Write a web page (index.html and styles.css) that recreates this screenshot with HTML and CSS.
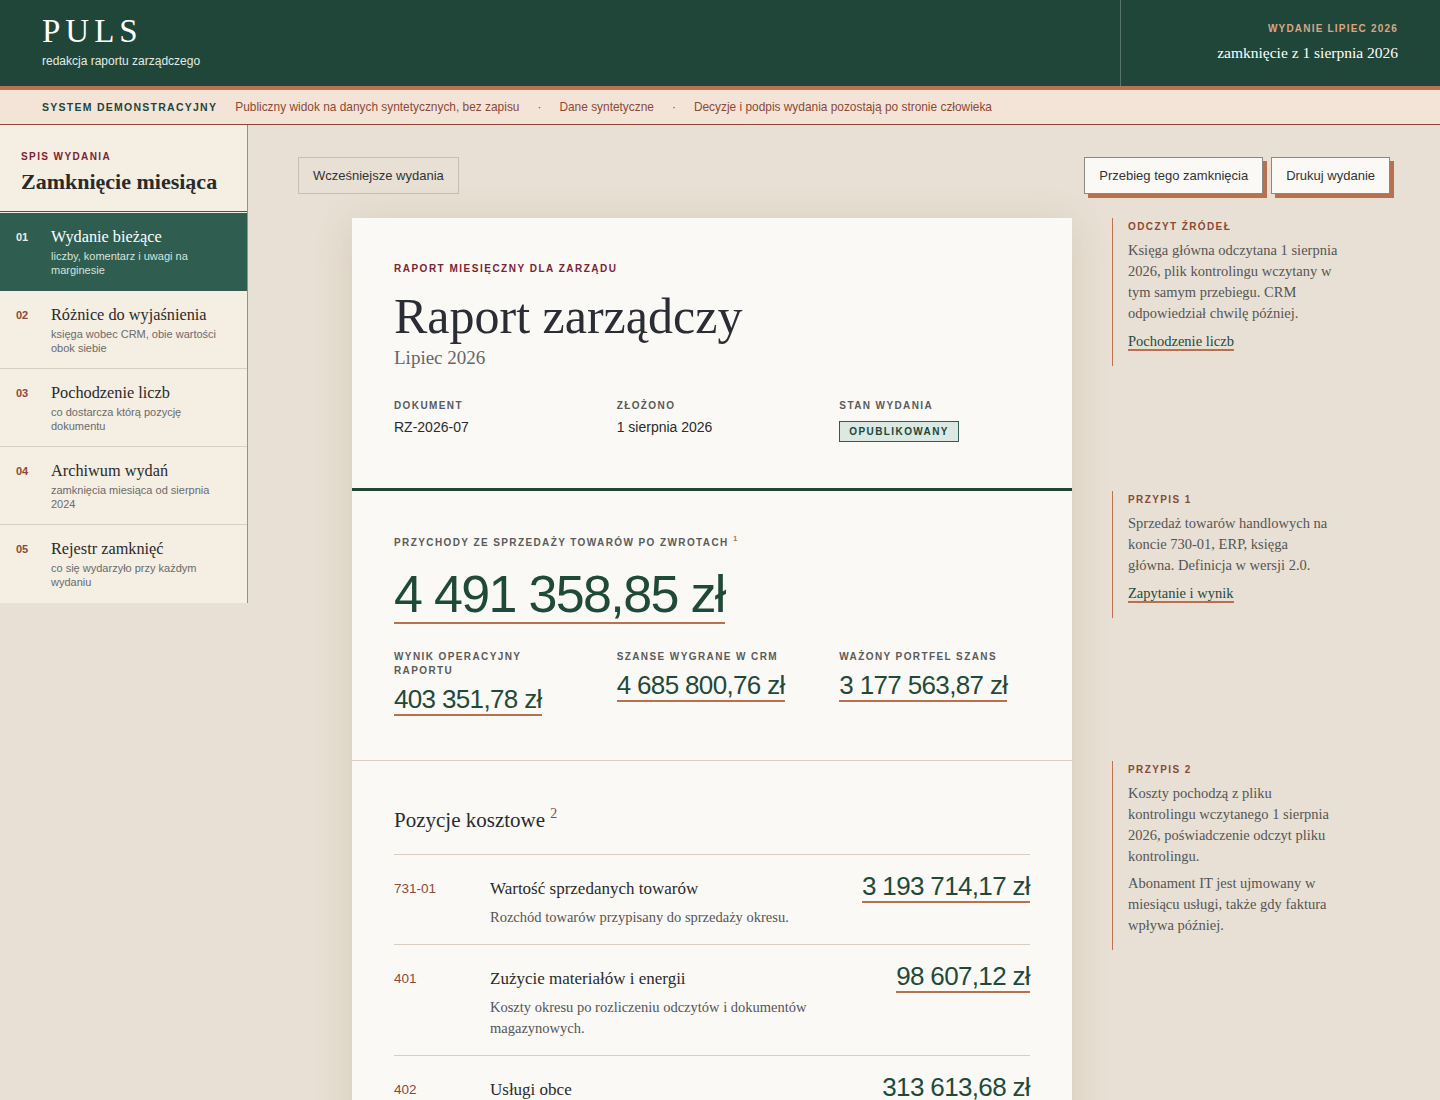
FILE: index.html
```html
<!DOCTYPE html>
<html lang="pl">
<head>
<meta charset="utf-8">
<title>PULS — Raport zarządczy</title>
<link rel="stylesheet" href="styles.css">
</head>
<body>
<header class="masthead">
  <div class="brand">
    <div class="brand-name">PULS</div>
    <div class="brand-sub">redakcja raportu zarządczego</div>
  </div>
  <div class="edition">
    <div class="edition-label">WYDANIE LIPIEC 2026</div>
    <div class="edition-date">zamknięcie z 1 sierpnia 2026</div>
  </div>
</header>
<div class="demo-bar">
  <strong class="demo-title">SYSTEM DEMONSTRACYJNY</strong>
  <span>Publiczny widok na danych syntetycznych, bez zapisu</span>
  <span class="dot">·</span>
  <span>Dane syntetyczne</span>
  <span class="dot">·</span>
  <span>Decyzje i podpis wydania pozostają po stronie człowieka</span>
</div>
<div class="layout">
  <aside class="toc">
    <div class="toc-head">
      <div class="toc-eyebrow">SPIS WYDANIA</div>
      <div class="toc-title">Zamknięcie miesiąca</div>
    </div>
    <ul class="toc-list">
      <li class="toc-item is-active">
        <span class="toc-num">01</span>
        <div><div class="toc-name">Wydanie bieżące</div><div class="toc-desc">liczby, komentarz i uwagi na marginesie</div></div>
      </li>
      <li class="toc-item">
        <span class="toc-num">02</span>
        <div><div class="toc-name">Różnice do wyjaśnienia</div><div class="toc-desc">księga wobec CRM, obie wartości obok siebie</div></div>
      </li>
      <li class="toc-item">
        <span class="toc-num">03</span>
        <div><div class="toc-name">Pochodzenie liczb</div><div class="toc-desc">co dostarcza którą pozycję dokumentu</div></div>
      </li>
      <li class="toc-item">
        <span class="toc-num">04</span>
        <div><div class="toc-name">Archiwum wydań</div><div class="toc-desc">zamknięcia miesiąca od sierpnia 2024</div></div>
      </li>
      <li class="toc-item">
        <span class="toc-num">05</span>
        <div><div class="toc-name">Rejestr zamknięć</div><div class="toc-desc">co się wydarzyło przy każdym wydaniu</div></div>
      </li>
    </ul>
  </aside>
  <main class="main">
    <div class="toolbar">
      <button class="btn btn-ghost">Wcześniejsze wydania</button>
      <div class="actions">
        <button class="btn btn-raised">Przebieg tego zamknięcia</button>
        <button class="btn btn-raised">Drukuj wydanie</button>
      </div>
    </div>
    <div class="report">
      <div class="doc-bg"></div>

      <section class="sec sec-head">
        <div class="eyebrow">RAPORT MIESIĘCZNY DLA ZARZĄDU</div>
        <h1 class="doc-title">Raport zarządczy</h1>
        <div class="doc-period">Lipiec 2026</div>
        <div class="meta">
          <div><div class="label">DOKUMENT</div><div class="meta-value">RZ-2026-07</div></div>
          <div><div class="label">ZŁOŻONO</div><div class="meta-value">1 sierpnia 2026</div></div>
          <div><div class="label">STAN WYDANIA</div><span class="badge">OPUBLIKOWANY</span></div>
        </div>
      </section>
      <aside class="note note-1">
        <div class="note-label">ODCZYT ŹRÓDEŁ</div>
        <p>Księga główna odczytana 1 sierpnia 2026, plik kontrolingu wczytany w tym samym przebiegu. CRM odpowiedział chwilę później.</p>
        <p class="note-more"><a href="#" class="note-link">Pochodzenie liczb</a></p>
      </aside>

      <section class="sec sec-lead">
        <div class="label">PRZYCHODY ZE SPRZEDAŻY TOWARÓW PO ZWROTACH <sup class="ref">1</sup></div>
        <div class="lead-figure">4 491 358,85 zł</div>
        <div class="stats">
          <div><div class="label stat-label">WYNIK OPERACYJNY RAPORTU</div><div class="stat-value">403 351,78 zł</div></div>
          <div><div class="label stat-label">SZANSE WYGRANE W CRM</div><div class="stat-value">4 685 800,76 zł</div></div>
          <div><div class="label stat-label">WAŻONY PORTFEL SZANS</div><div class="stat-value">3 177 563,87 zł</div></div>
        </div>
      </section>
      <aside class="note note-2 note-narrow">
        <div class="note-label">PRZYPIS 1</div>
        <p>Sprzedaż towarów handlowych na koncie 730-01, ERP, księga główna. Definicja w wersji 2.0.</p>
        <p class="note-more"><a href="#" class="note-link">Zapytanie i wynik</a></p>
      </aside>

      <section class="sec sec-costs">
        <h2 class="costs-title">Pozycje kosztowe <sup class="ref">2</sup></h2>
        <div class="costs-list">
          <div class="cost-row">
            <div class="cost-code">731-01</div>
            <div><div class="cost-name">Wartość sprzedanych towarów</div><div class="cost-desc">Rozchód towarów przypisany do sprzedaży okresu.</div></div>
            <div class="amount">3 193 714,17 zł</div>
          </div>
          <div class="cost-row">
            <div class="cost-code">401</div>
            <div><div class="cost-name">Zużycie materiałów i energii</div><div class="cost-desc">Koszty okresu po rozliczeniu odczytów i dokumentów magazynowych.</div></div>
            <div class="amount">98 607,12 zł</div>
          </div>
          <div class="cost-row">
            <div class="cost-code">402</div>
            <div><div class="cost-name">Usługi obce</div><div class="cost-desc">Abonament IT, usługi zewnętrzne i obsługa biura.</div></div>
            <div class="amount">313 613,68 zł</div>
          </div>
        </div>
      </section>
      <aside class="note note-3">
        <div class="note-label">PRZYPIS 2</div>
        <p>Koszty pochodzą z pliku kontrolingu wczytanego 1 sierpnia 2026, poświadczenie odczyt pliku kontrolingu.</p>
        <p>Abonament IT jest ujmowany w miesiącu usługi, także gdy faktura wpływa później.</p>
      </aside>
    </div>
  </main>
</div>
</body>
</html>
```

FILE: styles.css
```css
* { box-sizing: border-box; }

body {
  margin: 0;
  background: #e8e0d4;
  font-family: "Liberation Sans", Arial, sans-serif;
  color: #2b2b2b;
}

/* masthead */
.masthead {
  display: flex;
  height: 86px;
  background: #1f4638;
  color: #fff;
}
.brand {
  flex: 1;
  padding: 13px 42px 0;
}
.brand-name {
  font-family: "Liberation Serif", serif;
  font-size: 33px;
  line-height: 36px;
  letter-spacing: 5px;
}
.brand-sub {
  margin-top: 5px;
  font-size: 12px;
  line-height: 14px;
  color: #e4ebe7;
}
.edition {
  width: 320px;
  padding: 22px 42px 0;
  border-left: 1px solid #56766a;
  text-align: right;
}
.edition-label {
  font-size: 10px;
  line-height: 14px;
  font-weight: 700;
  letter-spacing: 0.12em;
  color: #d9a785;
}
.edition-date {
  margin-top: 7px;
  font-family: "Liberation Serif", serif;
  font-size: 15.5px;
  line-height: 20px;
}

/* demo bar */
.demo-bar {
  display: flex;
  align-items: center;
  gap: 18px;
  height: 39px;
  padding: 0 42px;
  background: #f4e4d8;
  border-top: 4px solid #b8734f;
  border-bottom: 1px solid #8b4a35;
  font-size: 11.9px;
  color: #8b4a35;
}
.demo-title {
  font-size: 10.5px;
  letter-spacing: 0.12em;
  color: #1f4638;
}

/* layout */
.layout {
  display: flex;
  align-items: flex-start;
}

/* table of contents */
.toc {
  flex: 0 0 248px;
  background: #f4eee3;
  border-right: 1px solid #9a8f84;
}
.toc-head {
  padding: 25px 20px 16px 21px;
  border-bottom: 1px solid #2f5e50;
}
.toc-eyebrow {
  font-size: 10px;
  line-height: 14px;
  font-weight: 700;
  letter-spacing: 0.14em;
  color: #7b2432;
}
.toc-title {
  margin-top: 5px;
  font-family: "Liberation Serif", serif;
  font-weight: 700;
  font-size: 22px;
  line-height: 26px;
  color: #2a2a2a;
}
.toc-list {
  list-style: none;
  margin: 0;
  padding: 1px 0 0;
}
.toc-item {
  display: grid;
  grid-template-columns: 35px 1fr;
  padding: 13px 20px 13px 16px;
  border-bottom: 1px solid #d9cfc0;
}
.toc-item:last-child { border-bottom: 0; padding-bottom: 14px; }
.toc-num {
  font-size: 11px;
  line-height: 22px;
  font-weight: 700;
  color: #8b4a35;
}
.toc-name {
  font-family: "Liberation Serif", serif;
  font-size: 16.3px;
  line-height: 22px;
  color: #2a2a2a;
}
.toc-desc {
  margin-top: 1px;
  font-size: 11px;
  line-height: 14px;
  color: #6b6b6b;
}
.toc-item.is-active {
  background: #2f5e50;
  border-bottom-color: #2f5e50;
}
.is-active .toc-num { color: #e6eee9; }
.is-active .toc-name { color: #fff; }
.is-active .toc-desc { color: #d6e2dc; }

/* main */
.main {
  flex: 1;
  padding: 32px 50px 0;
}
.toolbar {
  display: flex;
  justify-content: space-between;
  align-items: flex-start;
}
.actions {
  display: flex;
  gap: 8px;
}
.btn {
  display: inline-flex;
  align-items: center;
  height: 37px;
  padding: 0 14px;
  font-family: "Liberation Sans", Arial, sans-serif;
  font-size: 13px;
  color: #333;
  border: 1px solid #c9bdaf;
  background: transparent;
}
.btn-raised {
  background: #faf9f6;
  border-color: #8c8782;
  box-shadow: 4px 4px 0 #b8714f;
}

/* report grid */
.report {
  display: grid;
  grid-template-columns: 720px 1fr;
  column-gap: 40px;
  margin: 24px 0 0 54px;
}
.doc-bg {
  grid-column: 1;
  grid-row: 1 / 4;
  background: #faf9f6;
  box-shadow: 0 6px 36px rgba(110, 85, 50, 0.16);
}
.sec {
  grid-column: 1;
  padding-left: 42px;
  padding-right: 42px;
}
.sec-head {
  grid-row: 1;
  padding-top: 44px;
  padding-bottom: 46px;
  border-bottom: 3px solid #1f4638;
}
.sec-lead {
  grid-row: 2;
  padding-top: 45px;
  padding-bottom: 44px;
  border-bottom: 1px solid #d8cfc2;
}
.sec-costs {
  grid-row: 3;
  padding-top: 45px;
  padding-bottom: 40px;
}

.eyebrow {
  font-size: 10px;
  line-height: 14px;
  font-weight: 700;
  letter-spacing: 0.15em;
  color: #7b2432;
}
.doc-title {
  margin: 12px 0 0;
  font-family: "Liberation Serif", serif;
  font-weight: 400;
  font-size: 50px;
  line-height: 56px;
  color: #2a2d33;
}
.doc-period {
  margin-top: 2px;
  font-family: "Liberation Serif", serif;
  font-size: 19px;
  line-height: 24px;
  color: #666;
}
.label {
  font-size: 10px;
  line-height: 14px;
  font-weight: 700;
  letter-spacing: 0.14em;
  color: #5b5b5b;
}
.stat-label { padding-right: 12px; }
.ref {
  font-size: 8px;
  color: #b8714f;
  vertical-align: 5px;
  line-height: 0;
}
.meta, .stats {
  display: grid;
  grid-template-columns: repeat(3, 1fr);
  column-gap: 32px;
}
.meta { margin-top: 29px; }
.meta-value {
  margin-top: 4px;
  font-size: 14px;
  line-height: 20px;
  color: #2a2a2a;
}
.badge {
  display: inline-block;
  margin-top: 8px;
  height: 21px;
  padding: 0 9px;
  line-height: 19px;
  font-size: 10px;
  font-weight: 700;
  letter-spacing: 0.14em;
  color: #1f4638;
  background: #dce9e3;
  border: 1px solid #2f5e50;
}

.lead-figure {
  display: inline-block;
  margin-top: 18px;
  padding-bottom: 2px;
  font-size: 52px;
  line-height: 52px;
  letter-spacing: -0.032em;
  color: #1f4a3a;
  border-bottom: 2px solid #b8714f;
}
.stats { margin-top: 26px; }
.stat-value {
  display: inline-block;
  margin-top: 6px;
  font-size: 26px;
  line-height: 30px;
  letter-spacing: -0.025em;
  color: #1f4a3a;
  border-bottom: 2px solid #b8714f;
}

.costs-title {
  margin: 0 0 20px;
  font-family: "Liberation Serif", serif;
  font-weight: 400;
  font-size: 21px;
  line-height: 28px;
  color: #2a2a2a;
}
.costs-title .ref {
  font-family: "Liberation Serif", serif;
  font-size: 14px;
  vertical-align: 9px;
  color: #8b4a35;
}
.costs-list { border-top: 1px solid #d8cfc2; }
.cost-row {
  display: grid;
  grid-template-columns: 72px 1fr auto;
  column-gap: 24px;
  padding: 16px 0 16.5px;
  border-bottom: 1px solid #d8cfc2;
}
.cost-code {
  margin-top: 6px;
  font-size: 13.5px;
  line-height: 24px;
  color: #8b4a35;
}
.cost-name {
  margin-top: 6px;
  font-family: "Liberation Serif", serif;
  font-size: 17px;
  line-height: 24px;
  color: #2a2a2a;
}
.cost-desc {
  margin-top: 5.5px;
  max-width: 340px;
  font-family: "Liberation Serif", serif;
  font-size: 14.5px;
  line-height: 21px;
  color: #555;
}
.amount {
  align-self: start;
  justify-self: end;
  font-size: 26px;
  line-height: 30px;
  letter-spacing: -0.025em;
  color: #1f4a3a;
  border-bottom: 2px solid #b8714f;
}

/* margin notes */
.note {
  grid-column: 2;
  align-self: start;
  max-width: 228px;
  padding: 2px 0 14px 15px;
  border-left: 1px solid #c0714e;
}
.note-narrow { max-width: 220px; }
.note-1 { grid-row: 1; }
.note-2 { grid-row: 2; }
.note-3 { grid-row: 3; }
.note-label {
  font-size: 10px;
  line-height: 14px;
  font-weight: 700;
  letter-spacing: 0.14em;
  color: #8b4a35;
}
.note p {
  margin: 6px 0 0;
  font-family: "Liberation Serif", serif;
  font-size: 14.5px;
  line-height: 21px;
  color: #555;
}
.note p.note-more { margin-top: 7px; }
.note-link {
  color: #1f4a3a;
  text-decoration: none;
  border-bottom: 2px solid #b8714f;
}
```
